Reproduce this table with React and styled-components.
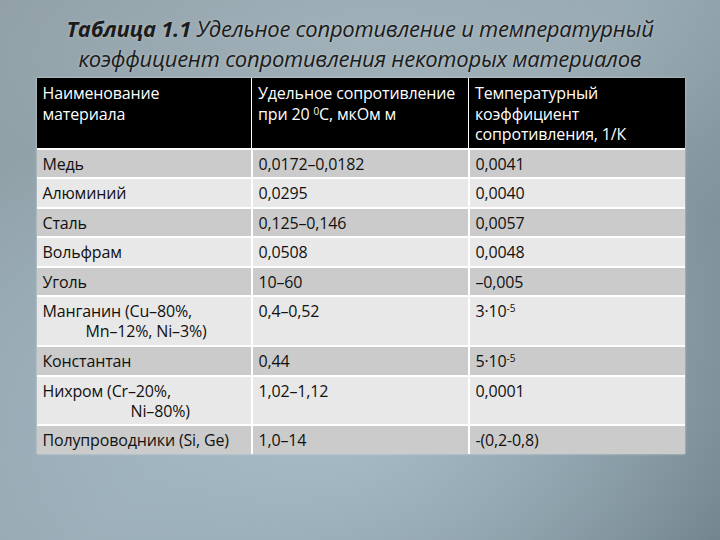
import React from 'react';
import styled, { createGlobalStyle } from 'styled-components';

const GlobalStyle = createGlobalStyle`
  html, body {
    margin: 0;
    padding: 0;
  }
  body {
    width: 720px;
    height: 540px;
    overflow: hidden;
  }
`;

const Slide = styled.div`
  width: 720px;
  height: 540px;
  box-sizing: border-box;
  padding-top: 13px;
  display: flex;
  flex-direction: column;
  align-items: center;
  background:
    radial-gradient(ellipse 70% 60% at 45% 78%, #a7bcc8 0%, rgba(167,188,200,0) 100%),
    radial-gradient(ellipse 60% 30% at 50% 8%, rgba(170,185,193,0.6) 0%, rgba(170,185,193,0) 100%),
    linear-gradient(135deg, #909fa6 0%, #95a7b0 50%, #6a7d85 100%);
  font-family: "Open Sans", "Liberation Sans", sans-serif;
`;

const Title = styled.h1`
  margin: 0 0 5px;
  font-size: 22px;
  font-weight: 400;
  font-style: italic;
  line-height: 30px;
  text-align: center;
  color: #1c1c1c;
  letter-spacing: -0.25px;
  text-shadow: 0 0 3px rgba(255,255,255,0.35);

  b {
    font-weight: 700;
  }
`;

const Table = styled.table`
  width: 648px;
  margin-left: 1px;
  border-collapse: collapse;
  table-layout: fixed;
  box-shadow: 0 0 2px rgba(255,255,255,0.6);
`;

const Th = styled.th`
  background: #000;
  color: #fff;
  font-weight: 400;
  font-size: 16px;
  line-height: 20.5px;
  text-align: left;
  vertical-align: top;
  padding: 5px 6px 3px;
  height: 61px;
  border: 1.5px solid #fff;
  border-top: none;
  letter-spacing: -0.15px;

  &:first-child { border-left: none; }
  &:last-child { border-right: none; }
`;

const Row = styled.tr`
  background: ${(p) => (p.$dark ? '#cbcbcb' : '#e8e8e8')};
`;

const Td = styled.td`
  font-size: 16px;
  line-height: 20px;
  color: #111;
  vertical-align: top;
  padding: 4px 6px 3.6px;
  border: 2px solid #fff;
  letter-spacing: -0.15px;

  &:first-child { border-left: none; }
  &:last-child { border-right: none; }
  tr:last-child & { border-bottom: none; }
`;

const Cont = styled.div`
  padding-left: ${(p) => p.$indent}px;
`;

const Sup = styled.sup`
  font-size: 10px;
  line-height: 0;
  vertical-align: 5px;
`;

const rows = [
  { name: 'Медь', rho: '0,0172–0,0182', alpha: '0,0041' },
  { name: 'Алюминий', rho: '0,0295', alpha: '0,0040' },
  { name: 'Сталь', rho: '0,125–0,146', alpha: '0,0057' },
  { name: 'Вольфрам', rho: '0,0508', alpha: '0,0048' },
  { name: 'Уголь', rho: '10–60', alpha: '–0,005' },
  { name: 'Манганин (Cu–80%,', cont: 'Mn–12%, Ni–3%)', indent: 43, rho: '0,4–0,52', alpha: ['3·10', '-5'] },
  { name: 'Константан', rho: '0,44', alpha: ['5·10', '-5'] },
  { name: 'Нихром (Cr–20%,', cont: 'Ni–80%)', indent: 88, rho: '1,02–1,12', alpha: '0,0001' },
  { name: 'Полупроводники (Si, Ge)', rho: '1,0–14', alpha: '-(0,2-0,8)' },
];

const App = () => (
  <Slide>
    <GlobalStyle />
    <Title>
      <b>Таблица 1.1</b> Удельное сопротивление и температурный<br />
      коэффициент сопротивления некоторых материалов
    </Title>
    <Table>
      <colgroup>
        <col style={{ width: 215 }} />
        <col style={{ width: 217 }} />
        <col style={{ width: 216 }} />
      </colgroup>
      <thead>
        <tr>
          <Th>Наименование<br />материала</Th>
          <Th>Удельное сопротивление<br />при 20 <Sup>0</Sup>С, мкОм м</Th>
          <Th>Температурный<br />коэффициент<br />сопротивления, 1/К</Th>
        </tr>
      </thead>
      <tbody>
        {rows.map((r, i) => (
          <Row key={r.name} $dark={i % 2 === 0}>
            <Td>
              {r.name}
              {r.cont && <Cont $indent={r.indent}>{r.cont}</Cont>}
            </Td>
            <Td>{r.rho}</Td>
            <Td>
              {Array.isArray(r.alpha) ? (
                <>{r.alpha[0]}<Sup>{r.alpha[1]}</Sup></>
              ) : r.alpha}
            </Td>
          </Row>
        ))}
      </tbody>
    </Table>
  </Slide>
);

export default App;
